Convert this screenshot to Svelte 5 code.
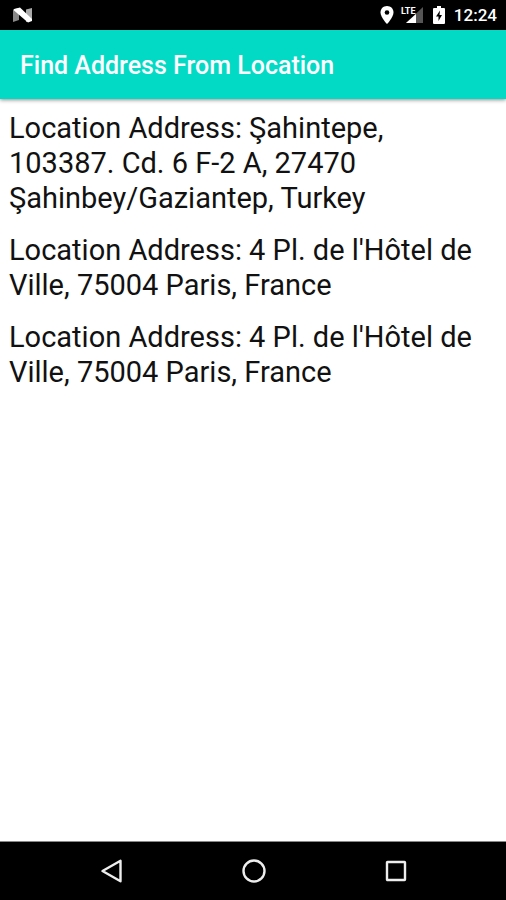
<script>
  const title = 'Find Address From Location'
  const time = '12:24'

  let addresses = [
    'Şahintepe, 103387. Cd. 6 F-2 A, 27470 Şahinbey/Gaziantep, Turkey',
    "4 Pl. de l'Hôtel de Ville, 75004 Paris, France",
    "4 Pl. de l'Hôtel de Ville, 75004 Paris, France"
  ]
</script>

<div class="screen">
  <div class="status-bar">
    <svg class="logo" width="20" height="16" viewBox="0 0 20 16" aria-hidden="true">
      <path d="M0 2.500 6 1v12l-6 2z" fill="#888" />
      <path d="M13 2.500 19 1v12.500L13 15z" fill="#aaa" />
      <path d="M1 2 7 0.500 19 12v2l-4 1.500L1 3.500z" fill="#fff" />
    </svg>
    <div class="status-icons">
      <svg class="pin" width="14" height="18" viewBox="0 0 14 18" aria-hidden="true">
        <path
          d="M7 0C3.200 0 .5 2.800.5 6.400.5 11 7 18 7 18s6.500-7 6.500-11.600C13.500 2.800 10.800 0 7 0z"
          fill="#fff"
        />
        <circle cx="7" cy="6.500" r="2.300" fill="#000" />
      </svg>
      <svg class="signal" width="23" height="18" viewBox="0 0 23 18">
        <path d="M22 1v16H5z" fill="#555" />
        <path d="M15 8v9H5z" fill="#fff" />
        <text x="0" y="8">LTE</text>
      </svg>
      <svg class="battery" width="12" height="18" viewBox="0 0 12 18" aria-hidden="true">
        <path d="M4 0h4v2h3q1 0 1 1v14q0 1-1 1H1q-1 0-1-1V3q0-1 1-1h3z" fill="#fff" />
        <path d="M7 4.500 3 10.500h2.500V15L9 9H6.500z" fill="#000" />
      </svg>
      <span class="time">{time}</span>
    </div>
  </div>

  <header class="app-bar">
    <h1>{title}</h1>
  </header>

  <main>
    {#each addresses as address}
      <p>Location Address: {address}</p>
    {/each}
  </main>

  <nav>
    <button type="button" aria-label="Back">
      <svg width="24" height="24" viewBox="0 0 24 24">
        <path d="M20.500 1.800v20.400L2.500 12z" />
      </svg>
    </button>
    <button type="button" aria-label="Home">
      <svg width="24" height="24" viewBox="0 0 24 24">
        <circle cx="12" cy="12" r="10.500" />
      </svg>
    </button>
    <button type="button" aria-label="Recent apps">
      <svg width="24" height="24" viewBox="0 0 24 24">
        <rect x="3" y="3" width="18" height="18" rx="0.500" />
      </svg>
    </button>
  </nav>
</div>

<style>
  :global(body) {
    margin: 0;
  }
  .screen {
    display: flex;
    flex-direction: column;
    min-height: 100vh;
    background: #fff;
    font-family: Roboto, sans-serif;
  }
  .status-bar {
    display: flex;
    align-items: center;
    justify-content: space-between;
    height: 30px;
    padding: 0 9px 0 13px;
    background: #000;
    color: #fff;
  }
  .status-icons {
    display: flex;
    align-items: center;
  }
  .signal {
    margin-left: 7px;
  }
  .signal text {
    fill: #fff;
    font-family: 'Liberation Sans Narrow', Roboto, sans-serif;
    font-size: 9px;
    font-weight: 700;
  }
  .battery {
    margin-left: 9px;
  }
  .time {
    margin-left: 9px;
    font-size: 17px;
    font-weight: 500;
    line-height: 24px;
  }
  .app-bar {
    display: flex;
    align-items: center;
    height: 69px;
    padding: 3px 20px 0;
    box-sizing: border-box;
    background: #03dac5;
    box-shadow: 0 1px 4px rgba(0, 0, 0, 0.45);
    color: #fff;
  }
  h1 {
    margin: 0;
    font-size: 25px;
    font-weight: 500;
    line-height: 32px;
  }
  main {
    flex: 1;
    display: flex;
    flex-direction: column;
    gap: 17px;
    padding: 12px 16px 12px 9px;
  }
  p {
    margin: 0;
    color: #111;
    font-size: 29px;
    line-height: 35px;
  }
  nav {
    display: flex;
    justify-content: center;
    height: 58px;
    padding: 0 39px 0 41px;
    border-top: 1px solid #888;
    background: #000;
  }
  button {
    display: flex;
    align-items: center;
    justify-content: center;
    flex: 1;
    padding: 0;
    border: 0;
    background: none;
  }
  button svg {
    fill: none;
    stroke: #eee;
    stroke-width: 2.400;
    stroke-linejoin: round;
  }
</style>
